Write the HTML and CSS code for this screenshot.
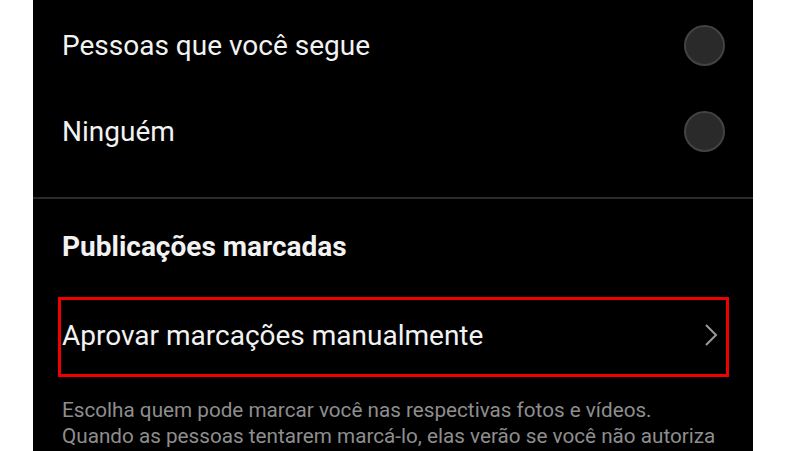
FILE: index.html
```html
<!DOCTYPE html>
<html lang="pt-BR">
<head>
    <meta charset="UTF-8">
    <meta name="viewport" content="width=device-width, initial-scale=1.0">
    <title>Marcações</title>
    <link rel="stylesheet" href="styles.css">
</head>
<body>
    <div id="wrap">
        <section class="options">
            <div class="option">
                <span class="option__label">Pessoas que você segue</span>
                <span class="radio"></span>
            </div>
            <div class="option">
                <span class="option__label">Ninguém</span>
                <span class="radio"></span>
            </div>
        </section>
        <section class="tagged">
            <h2 class="tagged__title">Publicações marcadas</h2>
            <div class="tagged__item">
                <span class="option__label">Aprovar marcações manualmente</span>
                <svg class="chevron" width="14" height="24" viewBox="0 0 14 24">
                    <path d="M2 2 L12 12 L2 22" fill="none" stroke="#9a9a9a" stroke-width="2"/>
                </svg>
            </div>
            <p class="tagged__desc">Escolha quem pode marcar você nas respectivas fotos e vídeos.<br>Quando as pessoas tentarem marcá-lo, elas verão se você não autoriza<br>marcações de todas as pessoas.</p>
        </section>
    </div>
</body>
</html>
```

FILE: styles.css
```css
* {
    margin: 0;
    padding: 0;
    box-sizing: border-box;
}
html, body {
    height: 451px;
    overflow: hidden;
    background-color: #fff;
}
body {
    font-family: Roboto, "Liberation Sans", sans-serif;
    color: #f2f2f2;
}
#wrap {
    width: 720px;
    height: 451px;
    margin-left: 33px;
    background-color: #000;
}
.options {
    padding-top: 2px;
    padding-bottom: 23px;
    border-bottom: 2px solid #2b2b2b;
}
.option {
    height: 86px;
    display: flex;
    align-items: center;
    justify-content: space-between;
    padding: 0 28px 0 29px;
}
.option__label {
    font-size: 28px;
}
.radio {
    width: 41px;
    height: 41px;
    border-radius: 50%;
    background-color: #2a2a2a;
    border: 2px solid #434343;
}
.tagged__title {
    font-size: 28px;
    font-weight: 700;
    padding: 32px 29px 0;
    line-height: 32px;
}
.tagged__item {
    height: 80px;
    margin: 34px 24px 0 25px;
    border: 3px solid #f00000;
    display: flex;
    align-items: center;
    justify-content: space-between;
    padding: 0 8px 4px 1px;
}
.tagged__desc {
    font-size: 20.7px;
    line-height: 26px;
    color: #8e8e8e;
    padding: 20px 29px 0;
}
```
